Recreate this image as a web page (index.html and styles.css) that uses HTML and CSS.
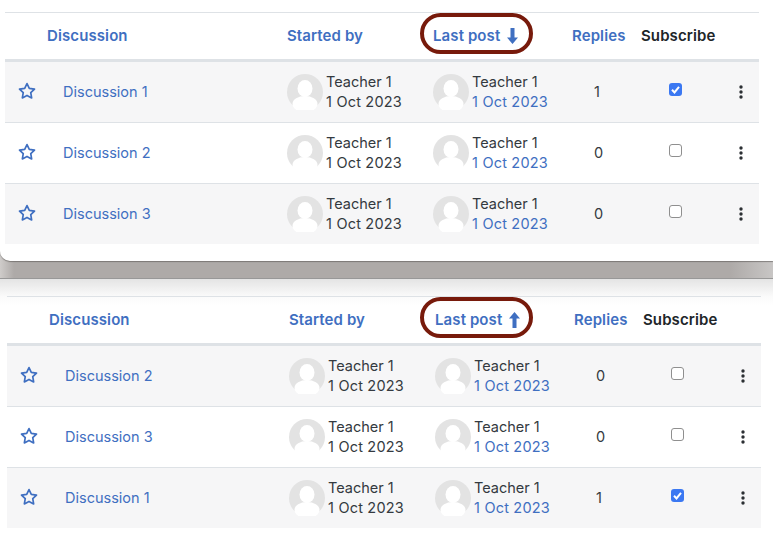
FILE: index.html
```html
<!DOCTYPE html>
<html lang="en">
<head>
<meta charset="utf-8">
<title>Discussions sorted by last post</title>
<link rel="stylesheet" href="styles.css">
</head>
<body>
<svg class="defs" width="0" height="0" aria-hidden="true">
  <defs>
    <symbol id="star" viewBox="0 0 18 18"><path d="M9 1.6l2.3 4.7 5.2.75-3.75 3.65.9 5.2L9 13.45 4.35 15.9l.9-5.2L1.5 7.05l5.2-.75z" fill="none" stroke="currentColor" stroke-width="1.7" stroke-linejoin="round"/></symbol>
    <symbol id="avatar" viewBox="0 0 36 36"><circle cx="18" cy="18" r="18" fill="#e3e3e3"/><ellipse cx="18" cy="14.5" rx="7.5" ry="8.5" fill="#fff"/><ellipse cx="18" cy="30" rx="12.5" ry="8" fill="#fff"/></symbol>
    <symbol id="dots" viewBox="0 0 4 14"><circle cx="2" cy="2" r="1.7"/><circle cx="2" cy="7" r="1.7"/><circle cx="2" cy="12" r="1.7"/></symbol>
    <symbol id="tick" viewBox="0 0 13 13"><path d="M3 6.8l2.5 2.6L10 3.8" fill="none" stroke="#fff" stroke-width="2"/></symbol>
    <symbol id="down" viewBox="0 0 11 16"><path d="M3.5 0h4v9.5H11L5.5 16 0 9.5h3.5z"/></symbol>
    <symbol id="up" viewBox="0 0 11 16"><path d="M3.5 16h4V6.5H11L5.5 0 0 6.5h3.5z"/></symbol>
  </defs>
</svg>

<div class="sheet">
  <div class="table">
    <div class="row head">
      <span></span>
      <a class="col">Discussion</a>
      <a class="col">Started by</a>
      <a class="col sorted"><span class="oval"></span>Last post <svg class="arrow"><use href="#down"/></svg></a>
      <a class="col">Replies</a>
      <span class="col dark">Subscribe</span>
      <span></span>
    </div>
    <div class="row shade">
      <svg class="star"><use href="#star"/></svg>
      <a class="title">Discussion 1</a>
      <div class="person"><svg class="avatar"><use href="#avatar"/></svg><div>Teacher 1<br><span class="date">1 Oct 2023</span></div></div>
      <div class="person"><svg class="avatar"><use href="#avatar"/></svg><div>Teacher 1<br><a class="date">1 Oct 2023</a></div></div>
      <span class="count">1</span>
      <span class="box on"><svg><use href="#tick"/></svg></span>
      <svg class="dots"><use href="#dots"/></svg>
    </div>
    <div class="row">
      <svg class="star"><use href="#star"/></svg>
      <a class="title">Discussion 2</a>
      <div class="person"><svg class="avatar"><use href="#avatar"/></svg><div>Teacher 1<br><span class="date">1 Oct 2023</span></div></div>
      <div class="person"><svg class="avatar"><use href="#avatar"/></svg><div>Teacher 1<br><a class="date">1 Oct 2023</a></div></div>
      <span class="count">0</span>
      <span class="box"></span>
      <svg class="dots"><use href="#dots"/></svg>
    </div>
    <div class="row shade last">
      <svg class="star"><use href="#star"/></svg>
      <a class="title">Discussion 3</a>
      <div class="person"><svg class="avatar"><use href="#avatar"/></svg><div>Teacher 1<br><span class="date">1 Oct 2023</span></div></div>
      <div class="person"><svg class="avatar"><use href="#avatar"/></svg><div>Teacher 1<br><a class="date">1 Oct 2023</a></div></div>
      <span class="count">0</span>
      <span class="box"></span>
      <svg class="dots"><use href="#dots"/></svg>
    </div>
  </div>
</div>

<div class="band"></div>

<div class="lower">
  <div class="table">
    <div class="row head">
      <span></span>
      <a class="col">Discussion</a>
      <a class="col">Started by</a>
      <a class="col sorted"><span class="oval wide"></span>Last post <svg class="arrow"><use href="#up"/></svg></a>
      <a class="col">Replies</a>
      <span class="col dark">Subscribe</span>
      <span></span>
    </div>
    <div class="row shade">
      <svg class="star"><use href="#star"/></svg>
      <a class="title">Discussion 2</a>
      <div class="person"><svg class="avatar"><use href="#avatar"/></svg><div>Teacher 1<br><span class="date">1 Oct 2023</span></div></div>
      <div class="person"><svg class="avatar"><use href="#avatar"/></svg><div>Teacher 1<br><a class="date">1 Oct 2023</a></div></div>
      <span class="count">0</span>
      <span class="box"></span>
      <svg class="dots"><use href="#dots"/></svg>
    </div>
    <div class="row">
      <svg class="star"><use href="#star"/></svg>
      <a class="title">Discussion 3</a>
      <div class="person"><svg class="avatar"><use href="#avatar"/></svg><div>Teacher 1<br><span class="date">1 Oct 2023</span></div></div>
      <div class="person"><svg class="avatar"><use href="#avatar"/></svg><div>Teacher 1<br><a class="date">1 Oct 2023</a></div></div>
      <span class="count">0</span>
      <span class="box"></span>
      <svg class="dots"><use href="#dots"/></svg>
    </div>
    <div class="row shade last">
      <svg class="star"><use href="#star"/></svg>
      <a class="title">Discussion 1</a>
      <div class="person"><svg class="avatar"><use href="#avatar"/></svg><div>Teacher 1<br><span class="date">1 Oct 2023</span></div></div>
      <div class="person"><svg class="avatar"><use href="#avatar"/></svg><div>Teacher 1<br><a class="date">1 Oct 2023</a></div></div>
      <span class="count">1</span>
      <span class="box on"><svg><use href="#tick"/></svg></span>
      <svg class="dots"><use href="#dots"/></svg>
    </div>
  </div>
</div>
</body>
</html>
```
FILE: styles.css
```css
* { box-sizing: border-box; }

html, body { margin: 0; height: 537px; overflow: hidden; background: #fff; }

body {
  font-family: Inter, "Liberation Sans", sans-serif;
  font-size: 14.5px;
  line-height: 20px;
  color: #343a40;
}

.defs { position: absolute; }

a { color: #3f6fc1; }

.date { letter-spacing: .2px; }

.sheet {
  position: relative;
  z-index: 1;
  height: 261px;
  padding: 12px 14px 0 5px;
  background: #fff;
  border-bottom-left-radius: 10px;
  box-shadow: 0 1px 1px rgba(90, 86, 84, .6);
}

.band {
  height: 28px;
  margin-top: -10px;
  background: linear-gradient(90deg, #cfccca 0, #aeaaa8 14px, #aeaaa8 730px, #c8c6c5 773px);
  border-bottom: 1px solid #989898;
}

.lower {
  height: 258px;
  padding: 17px 12px 0 7px;
  background: linear-gradient(#e4e4e4 0, #fbfbfb 18px, #fff 26px);
}

.table { width: 754px; }

.row {
  display: grid;
  grid-template-columns: 42px 240px 146px 139px 69px 84px 34px;
  align-items: center;
  height: 61px;
  border-bottom: 1px solid #dee2e6;
}

.row.last { height: 60px; border-bottom: 0; }

.shade { background: #f6f6f7; }

.head {
  height: 50px;
  border-top: 1px solid #dee2e6;
  border-bottom: 3px solid #dee2e6;
  background: transparent;
}

.col { font-weight: 600; font-size: 15px; letter-spacing: .1px; }

.dark { color: #212529; }

.sorted { position: relative; }

.arrow {
  width: 11px;
  height: 16px;
  margin-left: 3px;
  vertical-align: -3px;
  fill: currentColor;
}

.oval {
  position: absolute;
  left: -13px;
  top: -13px;
  width: 113px;
  height: 41px;
  border: 4px solid #771a0b;
  border-radius: 21px;
}

.oval.wide { left: -15px; }

.star {
  width: 18px;
  height: 18px;
  margin-left: 13px;
  margin-top: -3px;
  color: #3f6fc1;
}

.title { padding-left: 16px; }

.person {
  display: flex;
  align-items: center;
  gap: 3px;
  white-space: nowrap;
}

.avatar { width: 36px; height: 36px; flex: none; }

.count { padding-left: 22px; width: 48px; }

.box {
  display: block;
  width: 13px;
  height: 13px;
  margin: -6px 0 0 28px;
  border: 1px solid #8f8f8f;
  border-radius: 3px;
  background: #fff;
}

.box.on { border: 0; background: #3b78f2; }

.box svg { display: block; width: 13px; height: 13px; }

.dots {
  width: 4px;
  height: 14px;
  margin-left: 14px;
  fill: #2b2f33;
}
```
